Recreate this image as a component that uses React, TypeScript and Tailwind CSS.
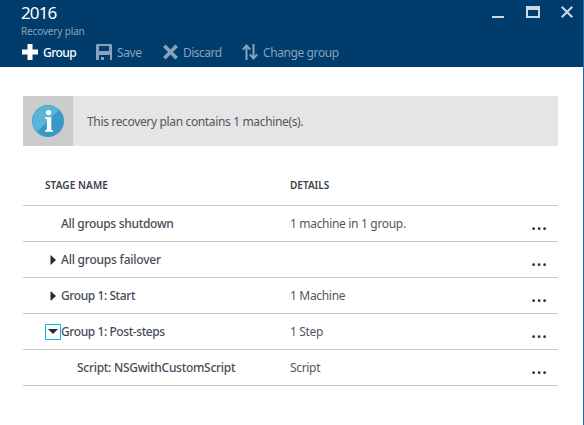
import type { ReactNode } from 'react';

type Stage = {
  name: string;
  details?: string;
  arrow?: 'right' | 'down';
  nested?: boolean;
  tracking: string;
};

const stages: Stage[] = [
  { name: 'All groups shutdown', details: '1 machine in 1 group.', tracking: 'tracking-[-0.3px]' },
  { name: 'All groups failover', arrow: 'right', tracking: 'tracking-[-0.22px]' },
  { name: 'Group 1: Start', details: '1 Machine', arrow: 'right', tracking: 'tracking-[-0.42px]' },
  { name: 'Group 1: Post-steps', details: '1 Step', arrow: 'down', tracking: 'tracking-[-0.42px]' },
  { name: 'Script: NSGwithCustomScript', details: 'Script', nested: true, tracking: 'tracking-[-0.29px]' },
];

function Command({ icon, label, active, className }: { icon: ReactNode; label: string; active?: boolean; className: string }) {
  return (
    <button className={`flex h-4 items-center gap-[5px] text-left text-[12px] leading-4 whitespace-nowrap ${active ? 'font-medium text-white' : 'text-[#87a3bc]'} ${className}`}>
      {icon}
      <span className="pt-0.5">{label}</span>
    </button>
  );
}

function Header() {
  return (
    <header className="flex h-[67px] justify-between bg-[#003c6c]">
      <div className="pl-[21px]">
        <h1 className="h-6 text-[17px] leading-[25px] tracking-[-0.9px] text-white">2016</h1>
        <p className="h-5 pt-px text-[10px] leading-3 tracking-[-0.15px] text-[#87a3bc]">Recovery plan</p>
        <div className="flex pl-px">
          <Command
            active
            label="Group"
            className="w-[74px] tracking-[-0.55px]"
            icon={<svg width="16" height="16" className="shrink-0"><path d="M5.5 0h5v5.5H16v5h-5.5V16h-5v-5.5H0v-5h5.5z" fill="#fff" /></svg>}
          />
          <Command
            label="Save"
            className="w-[67px] tracking-[-0.4px]"
            icon={
              <svg width="16" height="16" className="shrink-0" fill="currentColor" fillRule="evenodd">
                <path d="M1 0h14l1 1v15h-2v-5H3v5H0V1zM3 2v5h10V2zM5 13h3v3H5z" />
              </svg>
            }
          />
          <Command
            label="Discard"
            className="w-[79px] tracking-[-0.5px]"
            icon={
              <svg width="15" height="16" className="shrink-0" stroke="currentColor" strokeWidth="3.6">
                <path d="M1.3 1.8 13.7 14.2M13.7 1.8 1.3 14.2" />
              </svg>
            }
          />
          <Command
            label="Change group"
            className="tracking-[-0.4px]"
            icon={
              <svg width="16" height="16" className="shrink-0" stroke="currentColor" strokeWidth="2" fill="none">
                <path d="M4.5 16V2M0.8 5.7 4.5 1.6 8.2 5.7M11.5 0v14M7.8 10.3l3.7 4.1 3.7-4.1" />
              </svg>
            }
          />
        </div>
      </div>
      <div className="flex gap-[21px] pt-1.5 pr-2.5 text-[#ccd8e2]">
        <svg width="13" height="12"><path d="M0 10h12v2H0z" fill="currentColor" /></svg>
        <svg width="14" height="12"><path d="M0 0h14v12H0zM2 4v6h10V4z" fill="currentColor" fillRule="evenodd" /></svg>
        <svg width="12" height="12" stroke="currentColor" strokeWidth="2"><path d="M.7.7l10.6 10.6M11.3.7.7 11.3" /></svg>
      </div>
    </header>
  );
}

function InfoBanner() {
  return (
    <div className="flex h-[50px] bg-[#e5e5e5]">
      <div className="flex w-[50px] items-center justify-center bg-[#cccccc]">
        <svg width="32" height="32" viewBox="0 0 32 32">
          <circle cx="16" cy="16" r="16" fill="#3999c6" />
          <path d="M4.7 27.3A16 16 0 0 1 27.3 4.7z" fill="#59b4d9" />
          <circle cx="16.6" cy="7.6" r="2.7" fill="#fff" />
          <path d="M13 12.3h6.3v12.4l1.7.7v1.3h-8v-1.3l1.9-.7V14.1l-1.9-.6z" fill="#fff" />
        </svg>
      </div>
      <p className="pt-4 pl-3.5 text-[12px] leading-5 tracking-[-0.35px] text-[#55565f]">This recovery plan contains 1 machine(s).</p>
    </div>
  );
}

function Row({ stage }: { stage: Stage }) {
  return (
    <div className="flex h-9 items-center border-b border-[#c8c8c8] text-[12px] leading-5">
      <div className={`flex w-[267px] items-center ${stage.nested ? 'pl-[38px]' : 'pl-[22px]'}`}>
        <div className={`flex size-4 items-center justify-center ${stage.arrow === 'down' ? 'border border-[#00bcf2]' : ''}`}>
          {stage.arrow === 'right' && <svg width="6" height="10"><path d="M.5 0 6 5 .5 10z" fill="#252b36" /></svg>}
          {stage.arrow === 'down' && <svg width="10" height="5"><path d="M0 0h10L5 5z" fill="#252b36" /></svg>}
        </div>
        <span className={`pt-px font-medium whitespace-nowrap text-[#484c56] ${stage.tracking}`}>{stage.name}</span>
      </div>
      <span className="flex-1 pt-px tracking-[-0.32px] text-[#55565f]">{stage.details}</span>
      <svg width="15" height="4" className="mt-2.5 mr-[11px]" fill="#30343e">
        <circle cx="1.6" cy="1.7" r="1.4" />
        <circle cx="7.1" cy="1.7" r="1.4" />
        <circle cx="12.6" cy="1.7" r="1.4" />
      </svg>
    </div>
  );
}

export default function App() {
  return (
    <div className="h-[425px] w-[584px] overflow-hidden border-r border-[#1e6fb0] bg-white font-['Noto_Sans','Open_Sans',sans-serif]">
      <Header />
      <main className="pt-[29px] pr-[25px] pl-[23px]">
        <InfoBanner />
        <div className="mt-5">
          <div className="flex h-10 items-center border-b border-[#c8c8c8] text-[10px] font-semibold text-[#3c404b]">
            <span className="w-[267px] pl-[22px] tracking-[0.1px]">STAGE NAME</span>
            <span>DETAILS</span>
          </div>
          {stages.map((s) => <Row key={s.name} stage={s} />)}
        </div>
      </main>
    </div>
  );
}
